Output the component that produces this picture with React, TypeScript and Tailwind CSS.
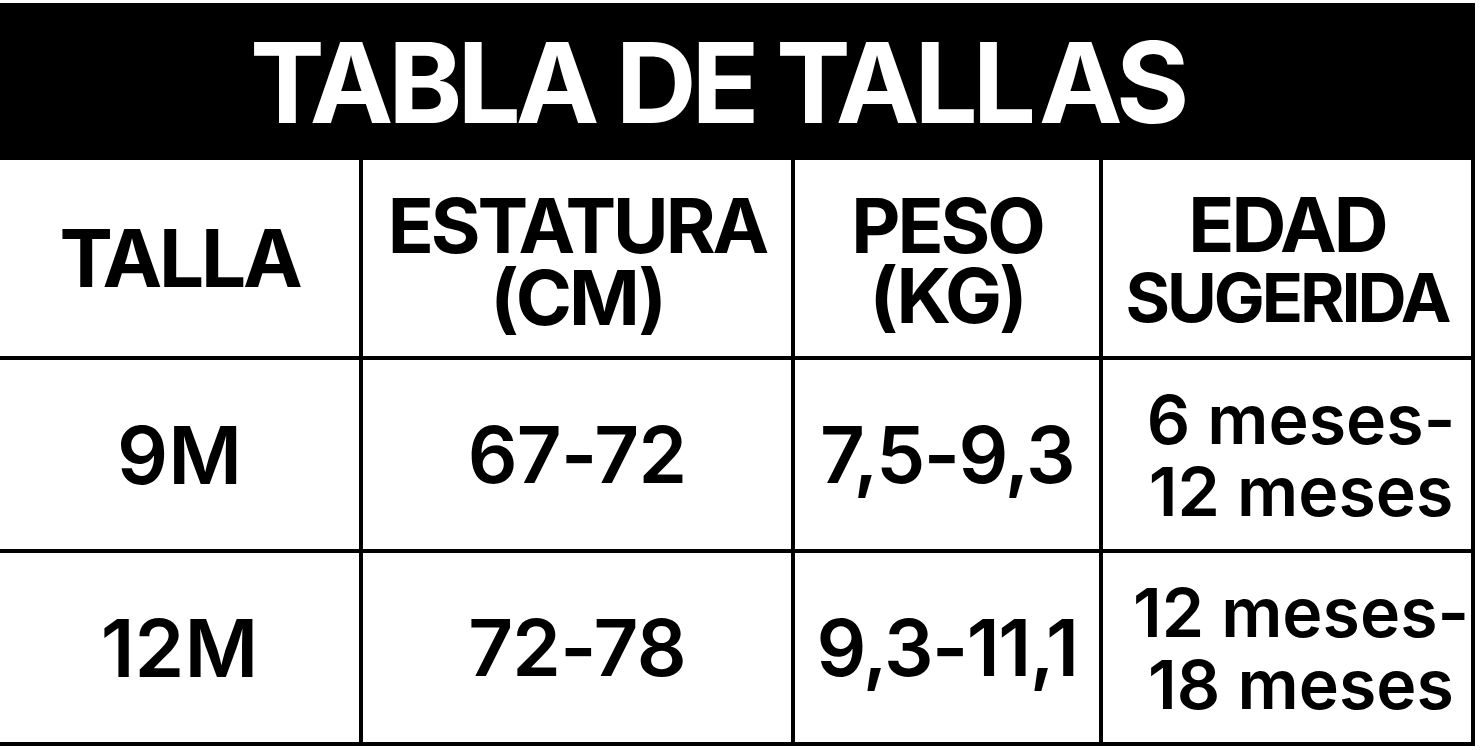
const rows = [
  { talla: "9M", estatura: "67-72", peso: "7,5-9,3", edad: ["6 meses-", "12 meses"] },
  { talla: "12M", estatura: "72-78", peso: "9,3-11,1", edad: ["12 meses-", "18 meses"] },
];

const cell = "flex flex-col items-center justify-center border-r-4 border-b-4 border-black text-center";

export default function App() {
  return (
    <div className="min-h-screen bg-white pt-[3px] font-['Inter',sans-serif] text-black">
      <div className="w-[1475px]">
        <div className="flex h-[157px] items-center bg-black pl-[250px]">
          <h1 className="text-[112px] font-bold leading-none tracking-[-0.045em] text-white">
            TABLA DE TALL<span className="ml-[8px]">AS</span>
          </h1>
        </div>

        <div className="grid grid-cols-[363px_432px_308px_372px]">
          <div className={`${cell} h-[200px]`}>
            <span className="text-[80px] font-bold leading-none tracking-[-0.04em]">TALLA</span>
          </div>
          <div className={`${cell} h-[200px] pt-[6px]`}>
            <span className="text-[76px] font-bold leading-[72px] tracking-[-0.04em]">
              ESTATURA
              <br />
              (CM)
            </span>
          </div>
          <div className={`${cell} h-[200px] pt-[4px]`}>
            <span className="text-[76px] font-bold leading-[70px] tracking-[-0.04em]">
              PESO
              <br />
              (KG)
            </span>
          </div>
          <div className={`${cell} h-[200px] pt-[4px]`}>
            <span className="text-[76px] font-bold leading-[70px] tracking-[-0.04em]">
              EDAD
              <br />
              <span className="text-[68px]">SUGERIDA</span>
            </span>
          </div>

          {rows.map((r) => (
            <div key={r.talla} className="contents">
              <div className={`${cell} h-[193px]`}>
                <span className="text-[80px] font-semibold leading-none">{r.talla}</span>
              </div>
              <div className={`${cell} h-[193px]`}>
                <span className="text-[78px] font-semibold leading-none tracking-[-0.01em]">{r.estatura}</span>
              </div>
              <div className={`${cell} h-[193px]`}>
                <span className="text-[78px] font-semibold leading-none tracking-[-0.02em]">{r.peso}</span>
              </div>
              <div className={`${cell} h-[193px] pl-[28px]`}>
                <span className="text-[68px] font-semibold leading-[72px]">
                  {r.edad[0]}
                  <br />
                  {r.edad[1]}
                </span>
              </div>
            </div>
          ))}
        </div>
      </div>
    </div>
  );
}
